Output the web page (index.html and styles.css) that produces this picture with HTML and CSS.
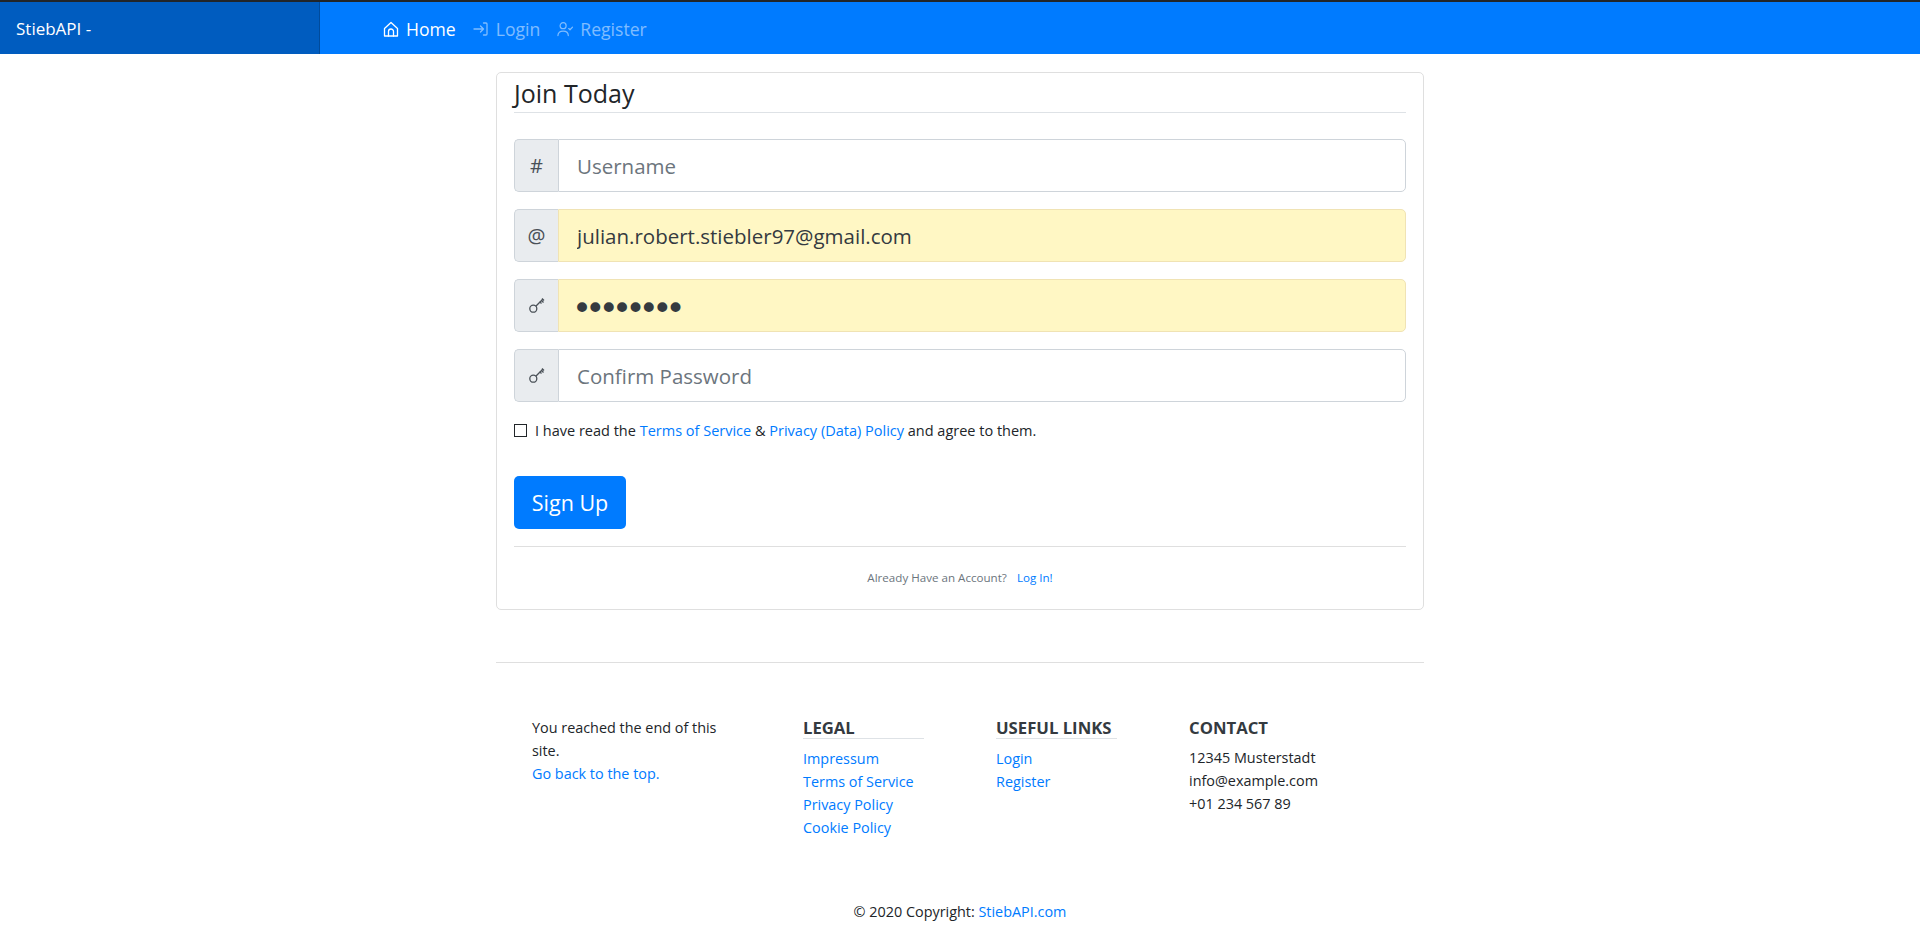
FILE: index.html

```html
<!DOCTYPE html>
<html lang="en">
<head>
  <meta charset="UTF-8" />
  <meta name="viewport" content="width=device-width, initial-scale=1.0"/>
  <title>StiebAPI - Join Today</title>
  <link rel="stylesheet" href="styles.css">
</head>
<body>
  <nav class="navbar">
    <a class="brand" href="#">StiebAPI -</a>
    <ul class="nav-links">
      <li><a class="nav-link active" href="#">
        <svg class="nav-icon" viewBox="0 0 16 16"><path d="M1.500 7.500 8 1.500l6.500 6V15h-13z"/><path d="M5.500 15v-4.500a2.500 2.500 0 0 1 5 0V15"/></svg>
        Home</a></li>
      <li><a class="nav-link" href="#">
        <svg class="nav-icon" viewBox="0 0 16 16"><path d="M1 8h9.500M7.500 5l3 3-3 3M10.500 2h2.500a1 1 0 0 1 1 1v10a1 1 0 0 1-1 1h-2.500"/></svg>
        Login</a></li>
      <li><a class="nav-link" href="#">
        <svg class="nav-icon" viewBox="0 0 17 16"><circle cx="6.500" cy="4.500" r="3.200"/><path d="M1 15c0-3.200 2.200-4.800 5.500-4.800S12 11.800 12 15M12.500 7.500l1.300 1.300L16.500 6"/></svg>
        Register</a></li>
    </ul>
  </nav>

  <main class="container">
    <section class="card">
      <form>
        <h2 class="legend">Join Today</h2>

        <div class="input-group">
          <span class="prepend">#</span>
          <input type="text" placeholder="Username" />
        </div>
        <div class="input-group">
          <span class="prepend">@</span>
          <input class="autofill" type="email" value="julian.robert.stiebler97@gmail.com" />
        </div>
        <div class="input-group">
          <span class="prepend">
            <svg class="key" viewBox="0 0 16 16"><circle cx="4.300" cy="11.700" r="3.500"/><path d="M6.800 9.200l6.700-6.700M10.500 4.500l2 2M12 3l2.500 2.500M13 1.500l2 2"/></svg>
          </span>
          <input class="autofill password" type="password" value="password" />
        </div>
        <div class="input-group">
          <span class="prepend">
            <svg class="key" viewBox="0 0 16 16"><circle cx="4.300" cy="11.700" r="3.500"/><path d="M6.800 9.200l6.700-6.700M10.500 4.500l2 2M12 3l2.500 2.500M13 1.500l2 2"/></svg>
          </span>
          <input type="password" placeholder="Confirm Password" />
        </div>

        <label class="terms">
          <span class="checkbox"></span>
          <span>I have read the <a href="#">Terms of Service</a> &amp; <a href="#">Privacy (Data) Policy</a> and agree to them.</span>
        </label>

        <button class="btn" type="button">Sign Up</button>
      </form>

      <div class="card-bottom">
        <small>Already Have an Account? <a href="#">Log In!</a></small>
      </div>
    </section>

    <hr class="footer-line">

    <footer class="footer">
      <div class="footer-end">
        <p>You reached the end of this site.</p>
        <a href="#">Go back to the top.</a>
      </div>
      <div>
        <h5>Legal</h5>
        <ul>
          <li><a href="#">Impressum</a></li>
          <li><a href="#">Terms of Service</a></li>
          <li><a href="#">Privacy Policy</a></li>
          <li><a href="#">Cookie Policy</a></li>
        </ul>
      </div>
      <div>
        <h5>Useful Links</h5>
        <ul>
          <li><a href="#">Login</a></li>
          <li><a href="#">Register</a></li>
        </ul>
      </div>
      <div class="footer-contact">
        <h5>Contact</h5>
        <p>12345 Musterstadt</p>
        <p>info@example.com</p>
        <p>+01 234 567 89</p>
      </div>
    </footer>

    <p class="copyright">© 2020 Copyright: <a href="#">StiebAPI.com</a></p>
  </main>
</body>
</html>
```

FILE: styles.css

```css
body {
  margin: 0;
  background-color: #fff;
  color: #212529;
  font-family: "Open Sans", "Noto Sans", sans-serif;
  font-size: 14.4px;
  line-height: 23px;
}
a {
  color: #007bff;
  text-decoration: none;
}
ul {
  list-style: none;
  margin: 0;
  padding: 0;
}
p {
  margin: 0;
}

.navbar {
  display: flex;
  height: 52px;
  border-top: 2px solid #212529;
  background-color: #007bff;
}
.brand {
  width: 303px;
  padding-left: 16px;
  border-right: 1px solid #004b9c;
  background-color: #005cbf;
  color: #fff;
  font-size: 17px;
  line-height: 54px;
}
.nav-links {
  display: flex;
  gap: 17px;
  margin-left: 63px;
}
.nav-link {
  display: flex;
  align-items: center;
  gap: 7px;
  height: 54px;
  color: rgba(255, 255, 255, 0.5);
  font-size: 17.6px;
}
.nav-link.active {
  color: #fff;
}
.nav-icon {
  width: 16px;
  height: 16px;
  fill: none;
  stroke: currentColor;
  stroke-width: 1.3;
  stroke-linecap: round;
  stroke-linejoin: round;
}

.container {
  width: 928px;
  margin: 0 auto;
}
.card {
  margin-top: 18px;
  padding: 0 17px;
  border: 1px solid #dfdfdf;
  border-radius: 5px;
  height: 536px;
}
.legend {
  height: 39px;
  margin: 0 0 26px;
  border-bottom: 1px solid #dee2e6;
  font-size: 25px;
  font-weight: 400;
  line-height: 41px;
}
.input-group {
  display: flex;
  height: 52.500px;
  margin-bottom: 17.500px;
}
.prepend {
  display: flex;
  align-items: center;
  justify-content: center;
  box-sizing: border-box;
  width: 44px;
  border: 1px solid #ced4da;
  border-right: none;
  border-radius: 5px 0 0 5px;
  background-color: #e9ecef;
  color: #495057;
  font-size: 20px;
}
.key {
  width: 16px;
  height: 16px;
  fill: none;
  stroke: #495057;
  stroke-width: 1.3;
}
.input-group input {
  flex: 1;
  box-sizing: border-box;
  padding: 1px 18px 0;
  border: 1px solid #ced4da;
  border-radius: 0 5px 5px 0;
  outline: none;
  background-color: #fff;
  color: #343a40;
  font-family: inherit;
  font-size: 20.5px;
}
.input-group input::placeholder {
  color: #6c757d;
}
.input-group input.autofill {
  border-color: #f0e3b4;
  background-color: #fff7c4;
}
.input-group input.password {
  padding-left: 13px;
  padding-top: 6px;
  font-family: "DejaVu Sans", sans-serif;
  font-size: 34px;
  letter-spacing: -6.700px;
}

.terms {
  display: flex;
  align-items: center;
  gap: 8px;
  height: 23px;
  font-size: 14.5px;
}
.checkbox {
  box-sizing: border-box;
  width: 13px;
  height: 13px;
  border: 1px solid #212529;
}
.btn {
  display: block;
  width: 112px;
  height: 53px;
  margin-top: 34px;
  padding: 0;
  border: none;
  border-radius: 5px;
  background-color: #007bff;
  color: #fff;
  font-family: inherit;
  font-size: 21.5px;
}
.card-bottom {
  margin-top: 17px;
  padding-top: 18px;
  border-top: 1px solid #dfdfdf;
  text-align: center;
  color: #6c757d;
}
.card-bottom small {
  font-size: 11.6px;
}
.card-bottom a {
  margin-left: 7px;
}

.footer-line {
  margin: 52px 0 0;
  border: none;
  border-top: 1px solid #dfdfdf;
}
.footer {
  display: grid;
  grid-template-columns: 271px 193px 193px 1fr;
  height: 174px;
  padding: 53px 0 0 36px;
}
.footer-end p {
  width: 200px;
}
.footer h5 {
  width: 121px;
  margin: 2px 0 8px;
  border-bottom: 1px solid #dee2e6;
  color: #343a40;
  font-size: 16.7px;
  font-weight: 700;
  line-height: 20px;
  text-transform: uppercase;
}
.footer-contact h5 {
  border-bottom: none;
}
.copyright {
  margin-top: 10px;
  text-align: center;
}
```
